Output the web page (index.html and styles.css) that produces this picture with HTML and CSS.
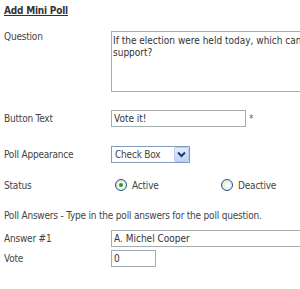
FILE: index.html
```html
<!DOCTYPE html>
<html lang="en">
<head>
  <meta charset="UTF-8" />
  <title>Add Mini Poll</title>
  <link rel="stylesheet" href="styles.css">
</head>
<body>
<form class="poll-form">
  <h2 class="title">Add Mini Poll</h2>

  <div class="row row-question">
    <label class="label" for="question">Question</label>
    <textarea id="question" class="question-box">If the election were held today, which candidate would you support?</textarea>
  </div>

  <div class="row row-button">
    <label class="label" for="btnText">Button Text</label>
    <input id="btnText" class="text-input btn-input" type="text" value="Vote it!" />
    <span class="required">*</span>
  </div>

  <div class="row row-appearance">
    <label class="label">Poll Appearance</label>
    <div class="select-box">
      <span class="select-value">Check Box</span>
      <span class="select-arrow">
        <svg width="9" height="7" viewBox="0 0 9 7"><path d="M1 1.5 L4.5 5 L8 1.5" fill="none" stroke="#1d3a6c" stroke-width="2"/></svg>
      </span>
    </div>
  </div>

  <div class="row row-status">
    <span class="label">Status</span>
    <label class="radio-item radio-active"><span class="radio checked"></span>Active</label>
    <label class="radio-item"><span class="radio"></span>Deactive</label>
  </div>

  <p class="hint">Poll Answers - Type in the poll answers for the poll question.</p>

  <div class="row row-answer">
    <label class="label" for="answer1">Answer #1</label>
    <input id="answer1" class="text-input answer-input" type="text" value="A. Michel Cooper" />
  </div>

  <div class="row row-vote">
    <label class="label" for="vote1">Vote</label>
    <input id="vote1" class="text-input vote-input" type="text" value="0" />
  </div>
</form>
</body>
</html>
```

FILE: styles.css
```css
* { box-sizing: border-box; }
body {
  margin: 0;
  font-family: "DejaVu Sans Condensed", "DejaVu Sans", sans-serif;
  font-size: 10px;
  letter-spacing: -0.2px;
  color: #444;
  background: #fff;
  overflow: hidden;
}
.poll-form {
  padding: 4px 0 0 4px;
  width: 420px;
}
.title {
  margin: 0;
  font-size: 10px;
  line-height: 13px;
  font-weight: bold;
  color: #333;
  text-decoration: underline;
}
.row {
  display: flex;
  align-items: center;
}
.label {
  width: 107px;
  flex: none;
}
.row-question {
  align-items: flex-start;
  margin-top: 14px;
}
.question-box {
  width: 290px;
  height: 61px;
  margin: 0;
  padding: 3px 1px;
  border: 1px solid #a5acb2;
  font: inherit;
  line-height: 12px;
  color: #333;
  resize: none;
  overflow: hidden;
}
.text-input {
  height: 17px;
  margin: 0;
  padding: 0 2px;
  border: 1px solid #a5acb2;
  font: inherit;
  color: #333;
}
.row-button { margin-top: 18px; }
.btn-input { width: 135px; }
.required {
  margin-left: 3px;
  color: #666;
}
.row-appearance { margin-top: 19px; }
.select-box {
  width: 79px;
  height: 17px;
  border: 1px solid #7f9db9;
  display: flex;
  align-items: center;
  padding-left: 3px;
}
.select-value { flex: 1; }
.select-arrow {
  width: 15px;
  height: 15px;
  border: 1px solid #b9c9ef;
  border-radius: 2px;
  background: linear-gradient(#e3ecfd, #c1d3fb);
  display: flex;
  align-items: center;
  justify-content: center;
}
.row-status { margin-top: 16px; }
.radio-item {
  display: flex;
  align-items: center;
  width: 106px;
}
.radio-active { margin-left: 4px; }
.radio {
  width: 12px;
  height: 12px;
  border: 1px solid #1c5180;
  border-radius: 50%;
  background: radial-gradient(circle at 60% 60%, #fff, #dcdcd5);
  margin-right: 5px;
  display: flex;
  align-items: center;
  justify-content: center;
}
.radio.checked::after {
  content: "";
  width: 4px;
  height: 4px;
  border-radius: 50%;
  background: #21a121;
}
.hint {
  margin: 18px 0 0;
  line-height: 13px;
}
.row-answer { margin-top: 8px; }
.answer-input { width: 220px; }
.row-vote { margin-top: 3px; }
.vote-input { width: 45px; }
```
